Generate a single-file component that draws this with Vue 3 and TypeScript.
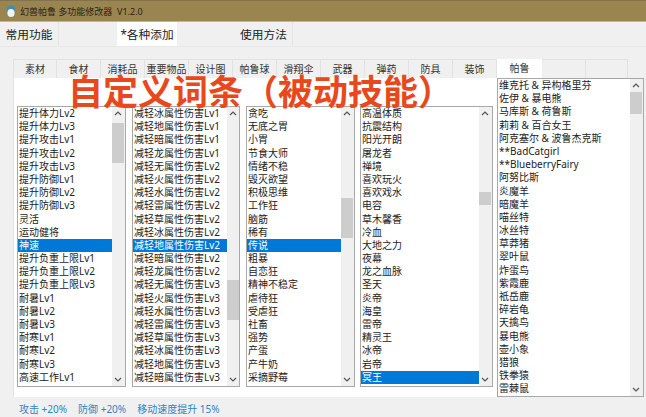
<script setup lang="ts">
const mainTabs = [
  { label: '常用功能', cls: 'm1' },
  { label: '*各种添加', cls: 'm2' },
  { label: '使用方法', cls: 'm3' },
]
const subTabs = ['素材', '食材', '消耗品', '重要物品', '设计图', '帕鲁球', '滑翔伞', '武器', '弹药', '防具', '装饰', '帕鲁', '', '']
const attrs = ['无', '火', '水', '雷', '草', '冰', '地', '暗', '龙']
const lists = [
  {
    cls: 'l1', selected: 10, thumbTop: 16, thumbHeight: 40,
    items: ['提升体力Lv2', '提升体力Lv3', '提升攻击Lv1', '提升攻击Lv2', '提升攻击Lv3', '提升防御Lv1', '提升防御Lv2', '提升防御Lv3', '灵活', '运动健将', '神速', '提升负重上限Lv1', '提升负重上限Lv2', '提升负重上限Lv3', '耐暑Lv1', '耐暑Lv2', '耐暑Lv3', '耐寒Lv1', '耐寒Lv2', '耐寒Lv3', '高速工作Lv1'],
  },
  {
    cls: 'l2', selected: 10, thumbTop: 173, thumbHeight: 40,
    items: [
      '减轻冰属性伤害Lv1', '减轻地属性伤害Lv1', '减轻暗属性伤害Lv1', '减轻龙属性伤害Lv1',
      ...attrs.map((a) => `减轻${a}属性伤害Lv2`),
      ...attrs.slice(0, 8).map((a) => `减轻${a}属性伤害Lv3`),
    ],
  },
  {
    cls: 'l3', selected: 10, thumbTop: 91, thumbHeight: 40,
    items: ['贪吃', '无底之胃', '小胃', '节食大师', '情绪不稳', '毁灭欲望', '积极思维', '工作狂', '脑筋', '稀有', '传说', '粗暴', '自恋狂', '精神不稳定', '虐待狂', '受虐狂', '社畜', '强势', '产蛋', '产牛奶', '采摘野莓'],
  },
  {
    cls: 'l4', selected: 20, thumbTop: 85, thumbHeight: 13,
    items: ['高温体质', '抗震结构', '阳光开朗', '屠龙者', '禅境', '喜欢玩火', '喜欢戏水', '电容', '草木馨香', '冷血', '大地之力', '夜幕', '龙之血脉', '圣天', '炎帝', '海皇', '雷帝', '精灵王', '冰帝', '岩帝', '冥王'],
  },
]
const palList = ['维克托 & 异构格里芬', '佐伊 & 暴电熊', '马库斯 & 荷鲁斯', '莉莉 & 百合女王', '阿克塞尔 & 波鲁杰克斯', '**BadCatgirl', '**BlueberryFairy', '阿努比斯', '炎魔羊', '暗魔羊', '喵丝特', '冰丝特', '草莽猪', '翠叶鼠', '炸蛋鸟', '紫霞鹿', '祇岳鹿', '碎岩龟', '天擒鸟', '暴电熊', '壶小象', '猎狼', '铁拳猿', '雷棘鼠']
</script>

<template>
  <div class="app">
    <header class="title">
      <svg class="logo" width="10" height="13" viewBox="0 0 10 13">
        <ellipse cx="5" cy="4.5" rx="4.5" ry="4" fill="#3c8fb0" />
        <ellipse cx="5" cy="8" rx="3.6" ry="4" fill="#eef4f4" />
      </svg>
      <span>幻兽帕鲁 多功能修改器&nbsp; V1.2.0</span>
    </header>
    <nav class="main-tabs">
      <div v-for="t in mainTabs" :key="t.label" class="main-tab" :class="t.cls">{{ t.label }}</div>
    </nav>
    <section class="body">
      <div class="sub-tabs">
        <div v-for="(t, i) in subTabs" :key="i" class="sub-tab" :class="[`s${i}`, { on: t === '帕鲁' }]">{{ t }}</div>
      </div>
      <div class="panel">
        <div class="lists">
          <div v-for="l in lists" :key="l.cls" class="listbox short" :class="l.cls">
            <ul>
              <li v-for="(it, i) in l.items" :key="it" :class="{ sel: i === l.selected }">{{ it }}</li>
            </ul>
            <div class="sb">
              <svg class="arrow up" width="8" height="5" viewBox="0 0 8 5"><path d="M1 4l3-3 3 3" fill="none" stroke="#555" stroke-width="1.2" /></svg>
              <div class="thumb" :style="{ top: l.thumbTop + 'px', height: l.thumbHeight + 'px' }"></div>
              <svg class="arrow down" width="8" height="5" viewBox="0 0 8 5"><path d="M1 1l3 3 3-3" fill="none" stroke="#555" stroke-width="1.2" /></svg>
            </div>
          </div>
        </div>
        <div class="listbox tall">
          <ul>
            <li v-for="it in palList" :key="it">{{ it }}</li>
          </ul>
          <div class="sb">
            <svg class="arrow up" width="8" height="5" viewBox="0 0 8 5"><path d="M1 4l3-3 3 3" fill="none" stroke="#555" stroke-width="1.2" /></svg>
            <div class="thumb" :style="{ top: '13px', height: '22px' }"></div>
            <svg class="arrow down" width="8" height="5" viewBox="0 0 8 5"><path d="M1 1l3 3 3-3" fill="none" stroke="#555" stroke-width="1.2" /></svg>
          </div>
        </div>
      </div>
      <footer class="status">
        <span>攻击 +20%</span><span>防御 +20%</span><span>移动速度提升 15%</span>
      </footer>
    </section>
    <div class="banner">自定义词条（被动技能）</div>
  </div>
</template>

<style>
html, body { margin: 0; padding: 0; background: #f0f0f0; }
</style>

<style scoped>
.app {
  position: relative;
  width: 646px;
  height: 417px;
  overflow: hidden;
  background: #f0f0f0;
  font-family: "Noto Sans", "Noto Sans CJK SC", sans-serif;
  color: #222;
}
.title {
  height: 22px;
  box-sizing: border-box;
  background: #9a8550;
  border-top: 1px solid #7f7350;
  border-bottom: 1px solid #c2b68f;
  display: flex;
  align-items: center;
  gap: 4px;
  padding-left: 6px;
  font-size: 9px;
  color: #2a2416;
  white-space: nowrap;
}
.main-tabs {
  display: flex;
  height: 25px;
  box-sizing: border-box;
  border-bottom: 1px solid #e8e8e8;
}
.main-tab {
  height: 24px;
  line-height: 24px;
  font-size: 11.7px;
  text-align: center;
  white-space: nowrap;
  background: #f0f0f0;
  border-right: 1px solid #e4e4e4;
  box-sizing: border-box;
}
.m1 { width: 59px; margin-right: 58px; }
.m2 { width: 60px; margin-right: 58px; background: #fff; border-right: none; }
.m3 { width: 58px; }
.body {
  padding: 12px 2px 0 13px;
}
.sub-tabs {
  display: flex;
  height: 19px;
}
.sub-tab {
  width: 44px;
  box-sizing: border-box;
  height: 19px;
  line-height: 19px;
  text-align: center;
  font-size: 10px;
  white-space: nowrap;
  background: #f0f0f0;
  border: 1px solid #e2e2e2;
  border-bottom: none;
  border-left: none;
  color: #333;
}
.sub-tab.s0 { border-left: 1px solid #e2e2e2; }
.sub-tab.s13 { width: 42px; }
.sub-tab.on { background: #fff; width: 45px; border: none; }
.panel {
  height: 319px;
  background: #fff;
  border-left: 1px solid #e2e2e2;
  display: flex;
  justify-content: space-between;
  box-sizing: border-box;
  padding-left: 3px;
}
.lists {
  display: flex;
  gap: 5px;
  padding-top: 28px;
  height: 281px;
}
.listbox {
  position: relative;
  box-sizing: border-box;
  border: 1px solid #a8a8a8;
  background: #fff;
  overflow: hidden;
  display: flex;
}
.short { height: 281px; }
.tall { width: 147px; height: 319px; }
.l1 { width: 109px; }
.l2 { width: 108px; margin-left: 1px; }
.l3 { width: 109px; margin-left: 1px; }
.l4 { width: 133px; }
ul {
  flex: 1;
  min-width: 0;
  margin: 0;
  padding: 0;
  list-style: none;
}
li {
  height: 13.2px;
  line-height: 13.2px;
  font-size: 10px;
  white-space: nowrap;
  padding-left: 1px;
  overflow: hidden;
}
li.sel { background: #0078d7; color: #fff; }
.sb {
  position: relative;
  width: 13px;
  flex: none;
  background: #f0f0f0;
}
.l2 .sb { width: 12px; }
.arrow { position: absolute; left: 2px; }
.arrow.up { top: 4px; }
.arrow.down { bottom: 4px; }
.thumb {
  position: absolute;
  left: 0;
  width: 12px;
  background: #cdcdcd;
}
.status {
  height: 20px;
  line-height: 24px;
  font-size: 10px;
  color: #2f84c6;
  padding-left: 6px;
  display: flex;
  gap: 11px;
}
.banner {
  position: absolute;
  left: 68px;
  top: 68px;
  font-size: 35px;
  line-height: 44px;
  font-weight: 700;
  font-family: "Noto Sans CJK SC", sans-serif;
  color: #e8481c;
  white-space: nowrap;
}
</style>
